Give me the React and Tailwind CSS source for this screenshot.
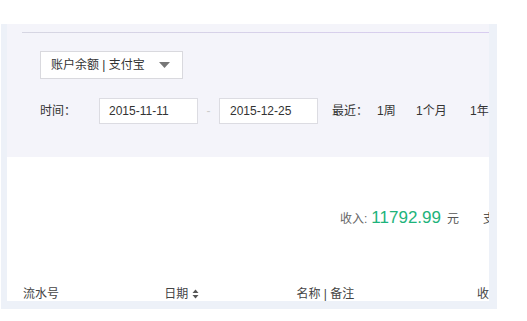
import React from 'react';

const font = { fontFamily: '"Liberation Sans", "Noto Sans CJK SC", sans-serif' };

const SortIcon = () => (
    <svg width="7" height="10" viewBox="0 0 7 10" className="ml-[4px]">
        <path d="M3.5 0.5 L6.5 4 L0.5 4 Z" fill="#555" />
        <path d="M3.5 9.5 L6.5 6 L0.5 6 Z" fill="#555" />
    </svg>
);

const App = () => {
    return (
        <div className="w-full h-[321px] bg-white pt-[24px] overflow-hidden" style={font}>
            {/* Outer panel */}
            <div className="ml-[1px] w-[496px] h-[285px] bg-[#edf1f8] pl-[6px]">
                <div className="w-[482px] h-[277px] overflow-hidden flex flex-col">
                    {/* Filters */}
                    <div className="bg-[#f4f4fa] h-[133px] pt-[8px] shrink-0">
                        <div className="ml-[15px] w-[468px] h-[1px] bg-gradient-to-r from-[#d6d6e2] to-[#d8ccf0]"></div>

                        <div className="ml-[33px] mt-[18px] w-[143px] h-[28px] bg-white border border-[#d9d9de] flex items-center pl-[10px] pr-[12px] justify-between">
                            <span className="text-[12px] text-[#333]">账户余额 | 支付宝</span>
                            <svg width="11" height="6" viewBox="0 0 11 6">
                                <path d="M0 0 L11 0 L5.5 6 Z" fill="#777" />
                            </svg>
                        </div>

                        <div className="ml-[33px] mt-[19px] flex items-center h-[26px] text-[12px] text-[#333] whitespace-nowrap">
                            <span className="w-[59px]">时间：</span>
                            <div className="w-[99px] h-[26px] bg-white border border-[#dcdce2] flex items-center pl-[9px]">2015-11-11</div>
                            <span className="w-[21px] text-center text-[#ccc]">-</span>
                            <div className="w-[99px] h-[26px] bg-white border border-[#dcdce2] flex items-center pl-[10px]">2015-12-25</div>
                            <span className="ml-[14px] w-[45px]">最近：</span>
                            <span className="w-[39px]">1周</span>
                            <span className="w-[54px]">1个月</span>
                            <span>1年</span>
                        </div>
                    </div>

                    {/* Summary + table */}
                    <div className="bg-white flex-1 whitespace-nowrap">
                        <div className="ml-[333px] mt-[48px] flex items-baseline h-[22px]">
                            <span className="text-[12px] text-[#666]">收入:</span>
                            <span className="ml-[4px] text-[17px] text-[#1db37b]">11792.99</span>
                            <span className="ml-[6px] text-[12px] text-[#555]">元</span>
                            <span className="ml-[24px] text-[12px] text-[#555]">支</span>
                        </div>

                        <div className="mt-[58px] flex items-center text-[12px] text-[#444]">
                            <span className="ml-[16px] w-[143px]">流水号</span>
                            <span className="w-[134px] flex items-center">日期<SortIcon /></span>
                            <span className="w-[183px]">名称 | 备注</span>
                            <span>收</span>
                        </div>
                    </div>
                </div>
            </div>
        </div>
    );
};

export default App;
